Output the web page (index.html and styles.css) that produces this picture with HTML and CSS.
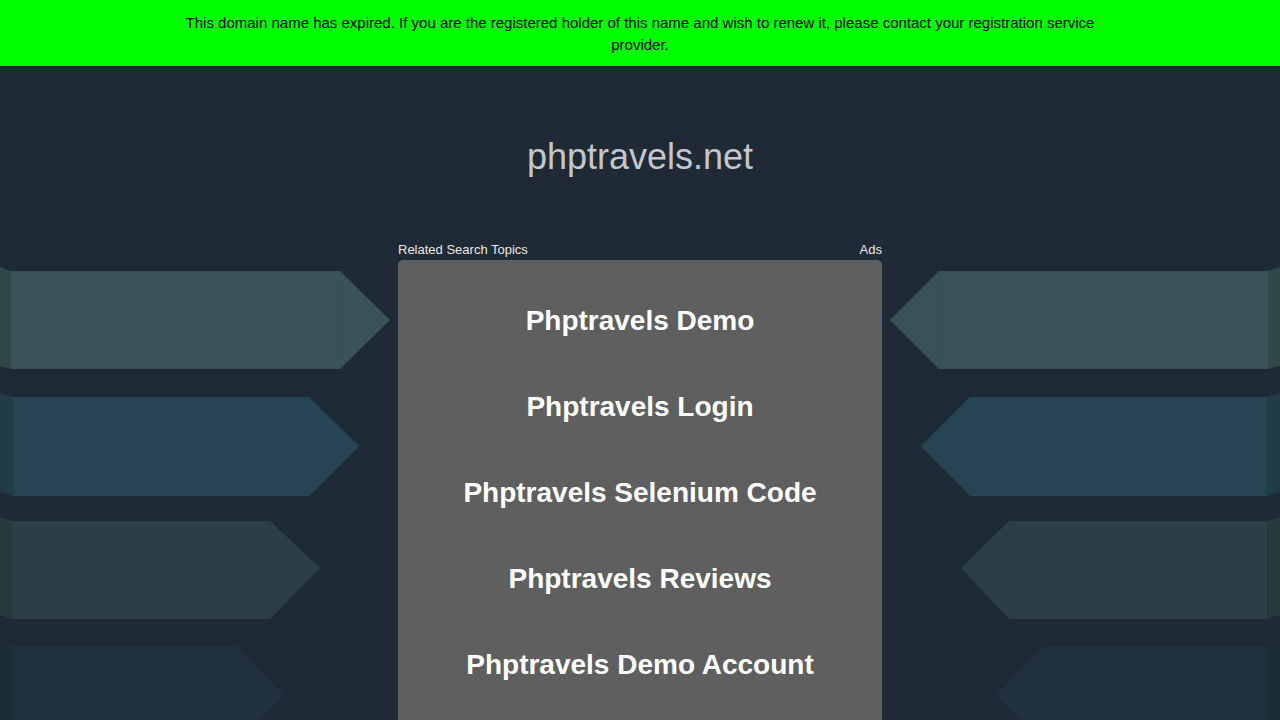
FILE: index.html
```html
<!DOCTYPE html>
<html lang="en">
<head>
<meta charset="utf-8">
<title>phptravels.net</title>
<link rel="stylesheet" href="styles.css">
</head>
<body>
<svg class="bg" width="1280" height="720" viewBox="0 0 1280 720" aria-hidden="true">
  <!-- left row 1 -->
  <polygon points="0,267 11,271 11,369 0,366" fill="#30474c"/>
  <polygon points="11,271 340,271 390,320 340,369 11,369" fill="#3a5257"/>
  <line x1="340.5" y1="271" x2="340.5" y2="369" stroke="#374e53" stroke-width="1"/>
  <!-- left row 2 -->
  <polygon points="0,393 13,397 13,496 0,492" fill="#203c49"/>
  <polygon points="13,397 309,397 359,446 309,496 13,496" fill="#264452"/>
  <line x1="309.5" y1="397" x2="309.5" y2="496" stroke="#24414f" stroke-width="1"/>
  <!-- left row 3 -->
  <polygon points="0,517 12,521 12,619 0,615" fill="#29393f"/>
  <polygon points="12,521 270,521 320,568 270,619 12,619" fill="#2c3e46"/>
  <line x1="270.5" y1="521" x2="270.5" y2="619" stroke="#2a3c43" stroke-width="1"/>
  <!-- left row 4 -->
  <polygon points="0,642 12,646 12,744 0,740" fill="#1d2d38"/>
  <polygon points="12,646 236,646 284,695 236,744 12,744" fill="#20303c"/>
  <line x1="236.5" y1="646" x2="236.5" y2="744" stroke="#1f2f3a" stroke-width="1"/>
  <!-- right row 1 -->
  <polygon points="1280,267 1268,271 1268,369 1280,366" fill="#30474c"/>
  <polygon points="1268,271 939,271 890,320 939,369 1268,369" fill="#3a5257"/>
  <line x1="939.5" y1="271" x2="939.5" y2="369" stroke="#374e53" stroke-width="1"/>
  <!-- right row 2 -->
  <polygon points="1280,393 1267,397 1267,496 1280,492" fill="#203c49"/>
  <polygon points="1267,397 970,397 921,446 970,496 1267,496" fill="#264452"/>
  <line x1="970.5" y1="397" x2="970.5" y2="496" stroke="#24414f" stroke-width="1"/>
  <!-- right row 3 -->
  <polygon points="1280,517 1267,521 1267,619 1280,615" fill="#29393f"/>
  <polygon points="1267,521 1009,521 961,568 1009,619 1267,619" fill="#2c3e46"/>
  <line x1="1009.5" y1="521" x2="1009.5" y2="619" stroke="#2a3c43" stroke-width="1"/>
  <!-- right row 4 -->
  <polygon points="1280,642 1267,646 1267,744 1280,740" fill="#1d2d38"/>
  <polygon points="1267,646 1044,646 996,695 1044,744 1267,744" fill="#20303c"/>
  <line x1="1044.5" y1="646" x2="1044.5" y2="744" stroke="#1f2f3a" stroke-width="1"/>
</svg>

<div class="banner">
  <p class="banner-text">This domain name has expired. If you are the registered holder of this name and wish to renew it, please contact your registration service provider.</p>
</div>

<main class="main">
  <h1 class="domain">phptravels.net</h1>
  <section class="related">
    <div class="related-head">
      <span>Related Search Topics</span>
      <span>Ads</span>
    </div>
    <div class="related-box">
      <a class="topic" href="#">Phptravels Demo</a>
      <a class="topic" href="#">Phptravels Login</a>
      <a class="topic" href="#">Phptravels Selenium Code</a>
      <a class="topic" href="#">Phptravels Reviews</a>
      <a class="topic" href="#">Phptravels Demo Account</a>
    </div>
  </section>
</main>
</body>
</html>
```

FILE: styles.css
```css
html, body {
  margin: 0;
  padding: 0;
}

body {
  position: relative;
  width: 1280px;
  height: 720px;
  overflow: hidden;
  background: #1e2a35;
  font-family: "Liberation Sans", Arial, sans-serif;
}

.bg {
  position: absolute;
  top: 0;
  left: 0;
  z-index: 0;
}

.banner {
  position: relative;
  z-index: 1;
  background: #00ff00;
  height: 66px;
  box-sizing: border-box;
  padding: 12px 0 10px;
}

.banner-text {
  margin: 0 auto;
  max-width: 940px;
  text-align: center;
  font-size: 15px;
  line-height: 22px;
  color: #000;
}

.main {
  position: relative;
  z-index: 1;
  display: flex;
  flex-direction: column;
  align-items: center;
}

.domain {
  margin: 70px 0 0;
  font-size: 36px;
  line-height: 42px;
  font-weight: normal;
  color: #c3c7cb;
}

.related {
  margin-top: 64px;
  width: 484px;
}

.related-head {
  display: flex;
  justify-content: space-between;
  font-size: 13px;
  line-height: 16px;
  color: #e8e8e8;
  margin-bottom: 2px;
}

.related-box {
  background: #5f5f5f;
  border-radius: 5px;
  padding: 18px 0 16px;
  display: flex;
  flex-direction: column;
}

.topic {
  display: flex;
  align-items: center;
  justify-content: center;
  height: 86px;
  font-size: 28px;
  font-weight: bold;
  color: #fff;
  text-decoration: none;
}
```
